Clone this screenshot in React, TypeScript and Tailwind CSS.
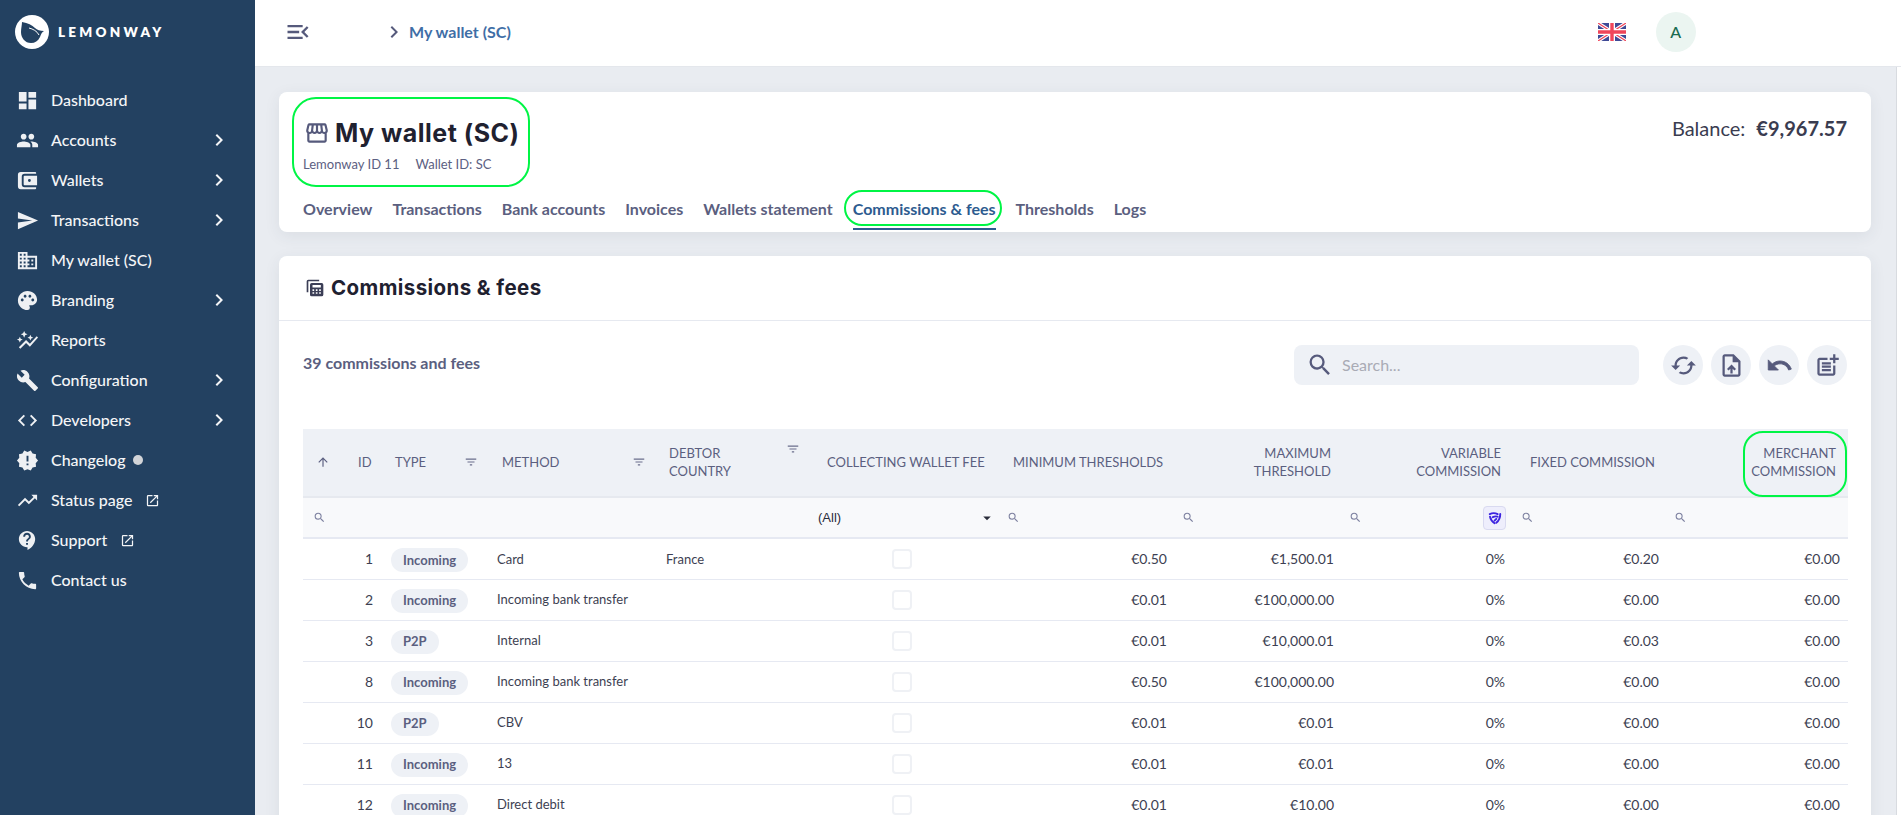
import React from "react";
import {
  MdDashboard, MdPeople, MdSend, MdDomain, MdPalette, MdAutoGraph, MdBuild, MdCode, MdNewReleases,
  MdTrendingUp, MdContactSupport, MdPhone, MdOpenInNew, MdChevronRight, MdOutlineStorefront, MdCached,
  MdOutlineUploadFile, MdOutlinePostAdd, MdMenuOpen, MdSearch, MdFilterList, MdArrowUpward, MdArrowDropDown,
} from "react-icons/md";

const WalletIcon = ({ className }: { className?: string }) => (
  <svg viewBox="0 0 24 24" className={className} fill="currentColor">
    <path fillRule="evenodd" d="M5 3h15a1 1 0 0 1 1 1v1H9a3 3 0 0 0-3 3v8a3 3 0 0 0 3 3h12v1a1 1 0 0 1-1 1H5a3 3 0 0 1-3-3V6a3 3 0 0 1 3-3Zm4 4h13v10H9a1 1 0 0 1-1-1V8a1 1 0 0 1 1-1Zm5 3.5a1.5 1.5 0 1 0 0 3 1.5 1.5 0 0 0 0-3Z" />
  </svg>
);

const CalcIcon = ({ className }: { className?: string }) => (
  <svg viewBox="0 0 24 24" className={className} fill="currentColor">
    <path d="M2 4a2 2 0 0 1 2-2h13v2H4v13H2V4Z" />
    <path fillRule="evenodd" d="M8 6h12a2 2 0 0 1 2 2v12a2 2 0 0 1-2 2H8a2 2 0 0 1-2-2V8a2 2 0 0 1 2-2Zm1 2.5v3h10v-3H9Zm0 5v2h2v-2H9Zm4 0v2h2v-2h-2Zm4 0v2h2v-2h-2Zm-8 3.5v2h2v-2H9Zm4 0v2h2v-2h-2Zm4 0v2h2v-2h-2Z" />
  </svg>
);

const UndoIcon = ({ className }: { className?: string }) => (
  <svg viewBox="0 0 24 24" className={className} fill="currentColor" stroke="currentColor" strokeWidth="0.8">
    <path d="M12.5 8c-2.65 0-5.05.99-6.9 2.6L2 7v9h9l-3.62-3.62c1.39-1.16 3.16-1.88 5.12-1.88 3.54 0 6.55 2.31 7.6 5.5l2.37-.78C21.08 11.03 17.15 8 12.5 8z" />
  </svg>
);

const LeafLogo = () => (
  <svg viewBox="0 0 34 34" className="w-[34px] h-[34px] shrink-0">
    <circle cx="17" cy="17" r="17" fill="#ffffff" />
    <path d="M7 7c6 1 10 3 13 6 2 2 5 3 9 3-2 1-3 3-4 6-2 4-5 6-9 6-6 0-10-5-10-11 0-4 1-7 1-10Z" fill="#234161" />
    <path d="M14 13c4 1 8 3 10 7" stroke="#ffffff" strokeWidth="1" fill="none" />
  </svg>
);

const Flag = () => (
  <svg viewBox="0 0 28 18" className="w-[28px] h-[18px]">
    <rect width="28" height="18" fill="#3f4a96" />
    <path d="M0 0 28 18M28 0 0 18" stroke="#ffffff" strokeWidth="3.5" />
    <path d="M0 0 28 18M28 0 0 18" stroke="#f0455a" strokeWidth="1.2" />
    <path d="M14 0v18M0 9h28" stroke="#ffffff" strokeWidth="6" />
    <path d="M14 0v18M0 9h28" stroke="#f0455a" strokeWidth="3.4" />
  </svg>
);

const ShieldLogo = () => (
  <svg viewBox="0 0 16 16" className="w-[14px] h-[14px]" fill="none" stroke="#3d24e0" strokeWidth="2.2" strokeLinecap="round">
    <path d="M2 3.5c3-1.4 6-1.4 9 0" />
    <path d="M14 3.5c0 4-1.4 7.5-4.5 10" />
    <path d="M7.5 14C4.5 12 2.8 9.6 2.3 6.5" />
    <path d="M5.5 7c2-1 4-1 5.5-.5" />
    <path d="M9.5 9 7.5 11" />
  </svg>
);

type Nav = { label: string; Icon: any; chev?: boolean; ext?: boolean; dot?: boolean };
const nav: Nav[] = [
  { label: "Dashboard", Icon: MdDashboard },
  { label: "Accounts", Icon: MdPeople, chev: true },
  { label: "Wallets", Icon: WalletIcon, chev: true },
  { label: "Transactions", Icon: MdSend, chev: true },
  { label: "My wallet (SC)", Icon: MdDomain },
  { label: "Branding", Icon: MdPalette, chev: true },
  { label: "Reports", Icon: MdAutoGraph },
  { label: "Configuration", Icon: MdBuild, chev: true },
  { label: "Developers", Icon: MdCode, chev: true },
  { label: "Changelog", Icon: MdNewReleases, dot: true },
  { label: "Status page", Icon: MdTrendingUp, ext: true },
  { label: "Support", Icon: MdContactSupport, ext: true },
  { label: "Contact us", Icon: MdPhone },
];

const tabs = ["Overview", "Transactions", "Bank accounts", "Invoices", "Wallets statement", "Commissions & fees", "Thresholds", "Logs"];

const rows = [
  ["1", "Incoming", "Card", "France", "€0.50", "€1,500.01", "€0.20"],
  ["2", "Incoming", "Incoming bank transfer", "", "€0.01", "€100,000.00", "€0.00"],
  ["3", "P2P", "Internal", "", "€0.01", "€10,000.01", "€0.03"],
  ["8", "Incoming", "Incoming bank transfer", "", "€0.50", "€100,000.00", "€0.00"],
  ["10", "P2P", "CBV", "", "€0.01", "€0.01", "€0.00"],
  ["11", "Incoming", "13", "", "€0.01", "€0.01", "€0.00"],
  ["12", "Incoming", "Direct debit", "", "€0.01", "€10.00", "€0.00"],
];

const Sidebar = () => (
  <aside className="w-[255px] shrink-0 h-full bg-[#234161] text-[#f4f5f7]">
    <div className="h-[80px] pl-[15px] pt-[15px] flex items-start gap-[9px]">
      <LeafLogo />
      <span className="mt-[9px] text-[13.5px] leading-[16px] font-extrabold tracking-[0.24em] text-white">LEMONWAY</span>
    </div>
    <nav>
      {nav.map(({ label, Icon, chev, ext, dot }) => (
        <div key={label} className="h-[40px] flex items-center pl-[16px] pr-[24px]">
          <span className="w-[35px] shrink-0 flex"><Icon className="w-[23px] h-[23px] text-[#eef0f3]" /></span>
          <span className="text-[16px] font-medium">{label}</span>
          {dot && <span className="ml-[7px] w-[10px] h-[10px] rounded-full bg-[#d2d4d8]" />}
          {ext && <MdOpenInNew className="ml-[13px] w-[15px] h-[15px]" />}
          {chev && <MdChevronRight className="ml-auto w-[24px] h-[24px]" />}
        </div>
      ))}
    </nav>
  </aside>
);

const Topbar = () => (
  <header className="h-[67px] shrink-0 bg-white border-b border-[#e4e7ec] flex items-center pl-[29px] pb-[2px] text-[#565a7c]">
    <MdMenuOpen className="w-[28px] h-[28px]" />
    <MdChevronRight className="ml-[70px] w-[24px] h-[24px]" />
    <span className="ml-[3px] text-[16px] font-bold text-[#3f6ea6]">My wallet (SC)</span>
    <div className="ml-[1087px] mr-0 flex items-center gap-[30px]">
      <Flag />
      <span className="w-[40px] h-[40px] rounded-full bg-[#ebf5f1] flex items-center justify-center text-[#1a6b50] text-[16px] font-medium">A</span>
    </div>
  </header>
);

const Annotation = ({ className }: { className: string }) => (
  <div className={`absolute border-2 border-[#00f545] pointer-events-none ${className}`} />
);

const WalletCard = () => (
  <section className="relative h-[140px] bg-white rounded-[8px] shadow-[0_4px_16px_rgba(50,60,80,0.08)] pl-[24px] pr-[24px]">
    <div className="flex justify-between">
      <div>
        <div className="pt-[24px] flex items-center gap-[5px] h-[57px] pl-[1px]">
          <MdOutlineStorefront className="w-[26px] h-[26px] text-[#565a7c]" />
          <h1 className="text-[25px] leading-[34px] font-bold tracking-[0.02em] text-[#1f2130] font-['Inter',sans-serif]">My wallet (SC)</h1>
        </div>
        <div className="mt-[5px] flex gap-[16px] text-[13px] leading-[20px] text-[#5c6082]">
          <span>Lemonway ID 11</span>
          <span>Wallet ID: SC</span>
        </div>
      </div>
      <div className="pt-[21px] text-[20px] leading-[30px] text-[#3a3c50] flex gap-[11px]">
        <span>Balance:</span>
        <span className="font-bold">€9,967.57</span>
      </div>
    </div>
    <div className="mt-[25px] flex gap-[20px] text-[16px] leading-[20px] font-bold text-[#5b5f80]">
      {tabs.map((t) => (
        <span key={t} className={t === "Commissions & fees" ? "text-[#2d5b8f] border-b-2 border-[#2d5b8f] h-[31px]" : "h-[31px]"}>{t}</span>
      ))}
    </div>
    <Annotation className="left-[13px] top-[5px] w-[238px] h-[90px] rounded-[24px]" />
    <Annotation className="left-[565px] top-[98px] w-[158px] h-[36px] rounded-[18px]" />
  </section>
);

const th = "align-middle font-normal text-[13px] leading-[18px] text-[#5b5f80] uppercase";
const filterIcon = <MdFilterList className="w-[14px] h-[14px] text-[#6a6e8c]" />;
const searchIcon = <MdSearch className="w-[13px] h-[13px] text-[#7d81a0]" />;

const Table = () => (
  <div className="relative mt-[44px]">
    <table className="w-[1545px] table-fixed border-collapse text-[14px] text-[#3d3f52]">
      <colgroup>
        <col className="w-[46px]" /><col className="w-[33px]" /><col className="w-[105px]" /><col className="w-[170px]" />
        <col className="w-[158px]" /><col className="w-[187px]" /><col className="w-[174px]" /><col className="w-[167px]" />
        <col className="w-[171px]" /><col className="w-[154px]" /><col className="w-[180px]" />
      </colgroup>
      <thead>
        <tr className="h-[68px] bg-[#eef1f6] border-b-2 border-[#e6e9ef]">
          <th className={`${th} pb-[2px]`}><MdArrowUpward className="ml-[13px] w-[14px] h-[14px] text-[#5b5f80]" /></th>
          <th className={`${th} pb-[2px] text-left pl-[9px]`}>ID</th>
          <th className={`${th} pb-[2px] pl-[13px] pr-[9px]`}><div className="flex items-center justify-between"><span>Type</span>{filterIcon}</div></th>
          <th className={`${th} pb-[2px] pl-[15px] pr-[11px]`}><div className="flex items-center justify-between"><span>Method</span>{filterIcon}</div></th>
          <th className={`${th} pb-[2px] pl-[12px] pr-[15px]`}><div className="flex justify-between items-start text-left"><span>Debtor<br />Country</span><span className="mt-[-2px]">{filterIcon}</span></div></th>
          <th className={`${th} pb-[2px] text-left pl-[12px] whitespace-nowrap`}>Collecting wallet fee</th>
          <th className={`${th} pb-[2px] text-left pl-[11px] whitespace-nowrap`}>Minimum thresholds</th>
          <th className={`${th} pb-[2px] text-right pr-[12px]`}>Maximum<br />Threshold</th>
          <th className={`${th} pb-[2px] text-right pr-[13px]`}>Variable<br />Commission</th>
          <th className={`${th} pb-[2px] text-left pl-[16px] whitespace-nowrap`}>Fixed commission</th>
          <th className={`${th} pb-[2px] text-right pr-[12px]`}>Merchant<br />Commission</th>
        </tr>
        <tr className="h-[41px] bg-[#f8f9fb] border-b-2 border-[#e6e9f2]">
          <th className="pl-[10px] font-normal">{searchIcon}</th>
          <th /><th /><th /><th />
          <th className="font-normal pl-[3px] pr-[6px] text-[13px] text-left text-[#2a2c3a] font-['Liberation_Sans',sans-serif]">
            <div className="flex items-center justify-between"><span>(All)</span><MdArrowDropDown className="w-[18px] h-[18px] text-[#2a2c3a]" /></div>
          </th>
          <th className="pl-[5px] font-normal">{searchIcon}</th>
          <th className="pl-[6px] font-normal">{searchIcon}</th>
          <th className="font-normal">
            <div className="flex items-center justify-between pl-[6px] pr-[8px]">
              {searchIcon}
              <span className="w-[23px] h-[24px] rounded-[4px] bg-[#eeeefc] border border-[#d9daf0] flex items-center justify-center"><ShieldLogo /></span>
            </div>
          </th>
          <th className="pl-[7px] font-normal text-left">{searchIcon}</th>
          <th className="pl-[6px] font-normal text-left">{searchIcon}</th>
        </tr>
      </thead>
      <tbody>
        {rows.map((r) => (
          <tr key={r[0]} className="h-[41px] border-b border-[#e6e9f2]">
            <td />
            <td className="text-right pr-[9px]">{r[0]}</td>
            <td className="pl-[9px]">
              <span className="inline-flex items-center h-[24px] px-[12px] mt-[3px] rounded-full bg-[#eef1f6] text-[13px] font-bold text-[#5b5f80]">{r[1]}</span>
            </td>
            <td className="pl-[10px] pt-[1px] whitespace-nowrap text-[13px]">{r[2]}</td>
            <td className="pl-[9px] pt-[1px] text-[13px]">{r[3]}</td>
            <td><div className="ml-[77px] w-[20px] h-[20px] rounded-[4px] border-2 border-[#eff1f5]" /></td>
            <td className="text-right pr-[9px]">{r[4]}</td>
            <td className="text-right pr-[9px]">{r[5]}</td>
            <td className="text-right pr-[9px]">0%</td>
            <td className="text-right pr-[9px]">{r[6]}</td>
            <td className="text-right pr-[8px]">€0.00</td>
          </tr>
        ))}
      </tbody>
    </table>
    <Annotation className="left-[1440px] top-[2px] w-[104px] h-[66px] rounded-[20px]" />
  </div>
);

const FeesCard = () => (
  <section className="mt-[24px] bg-white rounded-t-[8px] shadow-[0_4px_16px_rgba(50,60,80,0.08)]">
    <div className="h-[65px] border-b border-[#e6e9f0] flex items-center pl-[26px] gap-[6px]">
      <CalcIcon className="w-[20px] h-[20px] text-[#3b3e56]" />
      <h2 className="text-[20.5px] font-bold tracking-[0.02em] text-[#1f2130] font-['Inter',sans-serif]">Commissions &amp; fees</h2>
    </div>
    <div className="px-[24px] pt-[24px]">
      <div className="flex items-center h-[40px]">
        <span className="text-[16px] font-bold text-[#5b5f80] -mt-[4px]">39 commissions and fees</span>
        <div className="ml-auto w-[345px] h-[40px] rounded-[8px] bg-[#eef1f6] flex items-center pl-[12px] gap-[8px]">
          <MdSearch className="w-[28px] h-[28px] text-[#565a7c]" />
          <span className="text-[16px] text-[#a9abb5]">Search...</span>
        </div>
        <div className="ml-[24px] flex gap-[8px]">
          {[MdCached, MdOutlineUploadFile, UndoIcon, MdOutlinePostAdd].map((I, i) => (
            <span key={i} className="w-[40px] h-[40px] rounded-full bg-[#eef1f6] flex items-center justify-center">
              <I className="w-[27px] h-[27px] text-[#565a7c]" />
            </span>
          ))}
        </div>
      </div>
      <Table />
    </div>
  </section>
);

export default function App() {
  return (
    <div className="flex w-[1901px] h-[815px] overflow-hidden bg-[#e9ecf1] font-['Lato',sans-serif]">
      <Sidebar />
      <div className="flex-1 min-w-0 flex flex-col">
        <Topbar />
        <div className="flex-1 min-h-0 flex">
          <main className="flex-1 min-w-0 overflow-hidden pl-[24px] pr-[25px] pt-[25px]">
            <WalletCard />
            <FeesCard />
          </main>
          <div className="w-[5px] shrink-0 bg-white border-l border-[#d8dbe0]" />
        </div>
      </div>
    </div>
  );
}
